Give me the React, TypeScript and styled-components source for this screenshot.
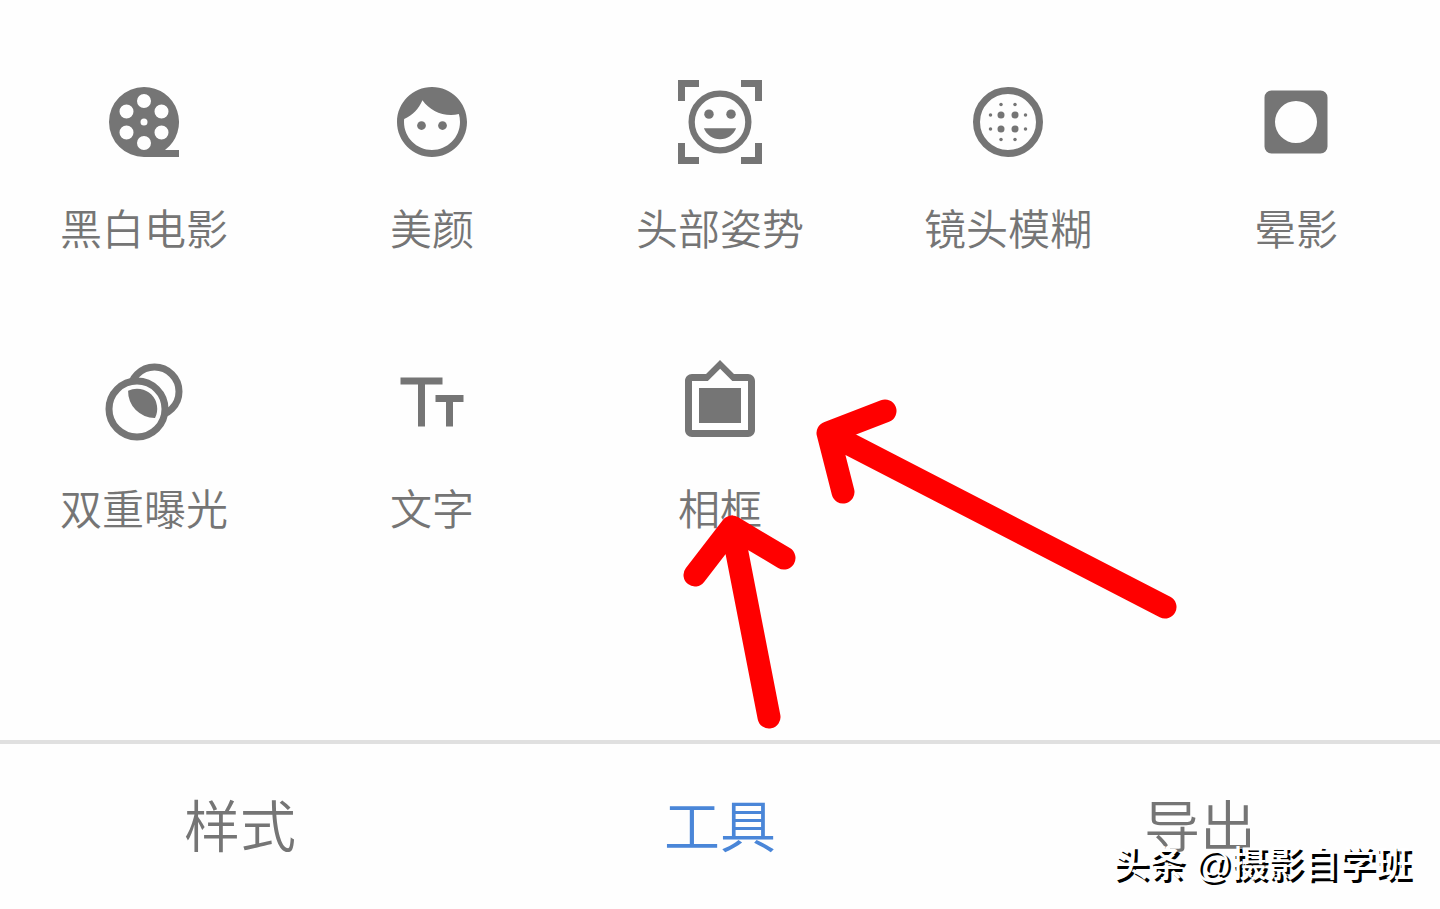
import React from 'react';
import styled, { createGlobalStyle } from 'styled-components';

const GlobalStyle = createGlobalStyle`
  * { box-sizing: border-box; }
  body {
    margin: 0;
    background: #fefefe;
    font-family: "Noto Sans CJK SC DemiLight", "Noto Sans CJK SC", "Noto Sans", sans-serif;
    font-weight: 350;
    color: #757575;
  }
`;

const Page = styled.div`
  position: relative;
  display: flex;
  flex-direction: column;
  min-height: 100vh;
  overflow: hidden;
`;

const ToolPanel = styled.main`
  position: relative;
  flex: 1;
  padding-top: 80px;
`;

const ToolGrid = styled.div`
  display: grid;
  grid-template-columns: repeat(5, 1fr);
  grid-auto-rows: 280px;
`;

const ToolButton = styled.button`
  display: flex;
  flex-direction: column;
  align-items: center;
  gap: 33px;
  padding: 0;
  border: 0;
  background: none;
  color: inherit;
  font: inherit;
  font-size: 42px;
  line-height: 60px;
  white-space: nowrap;
  cursor: pointer;
`;

const Icon = styled.svg`
  width: 84px;
  height: 84px;
  flex: none;
  fill: currentColor;
`;

const Arrows = styled.svg`
  position: absolute;
  top: 380px;
  left: 50%;
  width: 520px;
  height: 360px;
  margin-left: -60px;
  fill: none;
  stroke: #ff0000;
  stroke-width: 23px;
  stroke-linecap: round;
  stroke-linejoin: round;
  pointer-events: none;
`;

const TabBar = styled.nav`
  display: grid;
  grid-template-columns: repeat(3, 1fr);
  height: 169px;
  border-top: 4px solid #e0e0e0;
`;

const Tab = styled.button<{ $active?: boolean }>`
  padding: 0 0 8px;
  border: 0;
  background: none;
  color: ${({ $active }) => ($active ? '#4a86d8' : 'inherit')};
  font: inherit;
  font-size: 56px;
  line-height: 80px;
  cursor: pointer;
`;

const Watermark = styled.div`
  position: absolute;
  right: 29px;
  bottom: 17px;
  color: #ffffff;
  font-family: "Liberation Sans", "Noto Sans CJK SC", sans-serif;
  font-size: 36px;
  font-weight: 500;
  line-height: 54px;
  text-shadow: 3px 3px 0 #000000;
  pointer-events: none;
`;

const tools: { label: string; icon: React.ReactNode }[] = [
  {
    label: '黑白电影',
    icon: (
      <path
        fillRule="evenodd"
        d="M12 2a10 10 0 1 0 0 20h10v-2h-4A10 10 0 0 0 12 2zM12 4a2 2 0 1 1 0 4a2 2 0 0 1 0-4zM12 16a2 2 0 1 1 0 4a2 2 0 0 1 0-4zM7 7a2 2 0 1 1 0 4a2 2 0 0 1 0-4zM17 7a2 2 0 1 1 0 4a2 2 0 0 1 0-4zM7 13a2 2 0 1 1 0 4a2 2 0 0 1 0-4zM17 13a2 2 0 1 1 0 4a2 2 0 0 1 0-4zM12 11a1 1 0 1 1 0 2a1 1 0 0 1 0-2z"
      />
    ),
  },
  {
    label: '美颜',
    icon: (
      <>
        <circle cx="9" cy="13" r="1.25" />
        <circle cx="15" cy="13" r="1.25" />
        <path d="M12 2C6.48 2 2 6.48 2 12s4.48 10 10 10 10-4.48 10-10S17.52 2 12 2zm0 18c-4.41 0-8-3.59-8-8 0-.29.02-.58.05-.86 2.36-1.05 4.23-2.98 5.21-5.37C11.07 8.33 14.05 10 17.42 10c.78 0 1.53-.09 2.25-.26.21.71.33 1.47.33 2.26 0 4.41-3.59 8-8 8z" />
      </>
    ),
  },
  {
    label: '头部姿势',
    icon: (
      <>
        <path d="M0 0h6v2H2v4H0zM18 0h6v6h-2V2h-4zM0 18h2v4h4v2H0zM22 18h2v6h-6v-2h4z" />
        <circle cx="12" cy="12" r="8.1" fill="none" stroke="currentColor" strokeWidth="1.8" />
        <circle cx="8.85" cy="9.75" r="1.35" />
        <circle cx="15.15" cy="9.75" r="1.35" />
        <path d="M12 16.95c2.1 0 3.88-1.31 4.6-3.15H7.4c.72 1.84 2.5 3.15 4.6 3.15z" />
      </>
    ),
  },
  {
    label: '镜头模糊',
    icon: (
      <>
        <circle cx="12" cy="12" r="9" fill="none" stroke="currentColor" strokeWidth="2" />
        {[[10, 10], [14, 10], [10, 14], [14, 14]].map(([x, y]) => (
          <circle key={`${x}-${y}`} cx={x} cy={y} r="1" />
        ))}
        {[[10, 7], [14, 7], [7, 10], [17, 10], [7, 14], [17, 14], [10, 17], [14, 17]].map(([x, y]) => (
          <circle key={`${x}-${y}`} cx={x} cy={y} r="0.5" />
        ))}
      </>
    ),
  },
  {
    label: '晕影',
    icon: (
      <path
        fillRule="evenodd"
        d="M5 3h14a2 2 0 0 1 2 2v14a2 2 0 0 1-2 2H5a2 2 0 0 1-2-2V5a2 2 0 0 1 2-2zM12 6a6 6 0 1 0 0 12a6 6 0 0 0 0-12z"
      />
    ),
  },
  {
    label: '双重曝光',
    icon: (
      <>
        <circle cx="15" cy="9" r="7" fill="none" stroke="currentColor" strokeWidth="2" />
        <circle cx="10" cy="14" r="8" fill="#fefefe" stroke="currentColor" strokeWidth="2" />
        <path d="M7.45 8.8A5.75 5.75 0 0 1 15.15 16.55A7.6 7.6 0 0 1 7.45 8.8z" />
      </>
    ),
  },
  { label: '文字', icon: <path d="M3 5h12v2h-5v12H8V7H3zM13 10h8v2h-3v7h-2v-7h-3z" /> },
  {
    label: '相框',
    icon: (
      <>
        <path d="M20 4h-4l-4-4-4 4H4c-1.1 0-2 .9-2 2v14c0 1.1.9 2 2 2h16c1.1 0 2-.9 2-2V6c0-1.1-.9-2-2-2zm0 16H4V6h4.52l3.52-3.5L15.52 6H20v14z" />
        <path d="M6 8h12v10H6z" />
      </>
    ),
  },
];

const tabs = ['样式', '工具', '导出'];

export default function App() {
  return (
    <Page>
      <GlobalStyle />
      <ToolPanel>
        <ToolGrid>
          {tools.map(({ label, icon }) => (
            <ToolButton key={label} type="button">
              <Icon viewBox="0 0 24 24" aria-hidden="true">{icon}</Icon>
              {label}
            </ToolButton>
          ))}
        </ToolGrid>
        <Arrows viewBox="660 380 520 360" aria-hidden="true">
          <path d="M885 411L828 433L843 492M828 433L1165 607" />
          <path d="M695 575L732 527L784 558M732 527L769 717" />
        </Arrows>
      </ToolPanel>
      <TabBar>
        {tabs.map((label) => (
          <Tab key={label} type="button" $active={label === '工具'}>{label}</Tab>
        ))}
      </TabBar>
      <Watermark>头条 @摄影自学班</Watermark>
    </Page>
  );
}
